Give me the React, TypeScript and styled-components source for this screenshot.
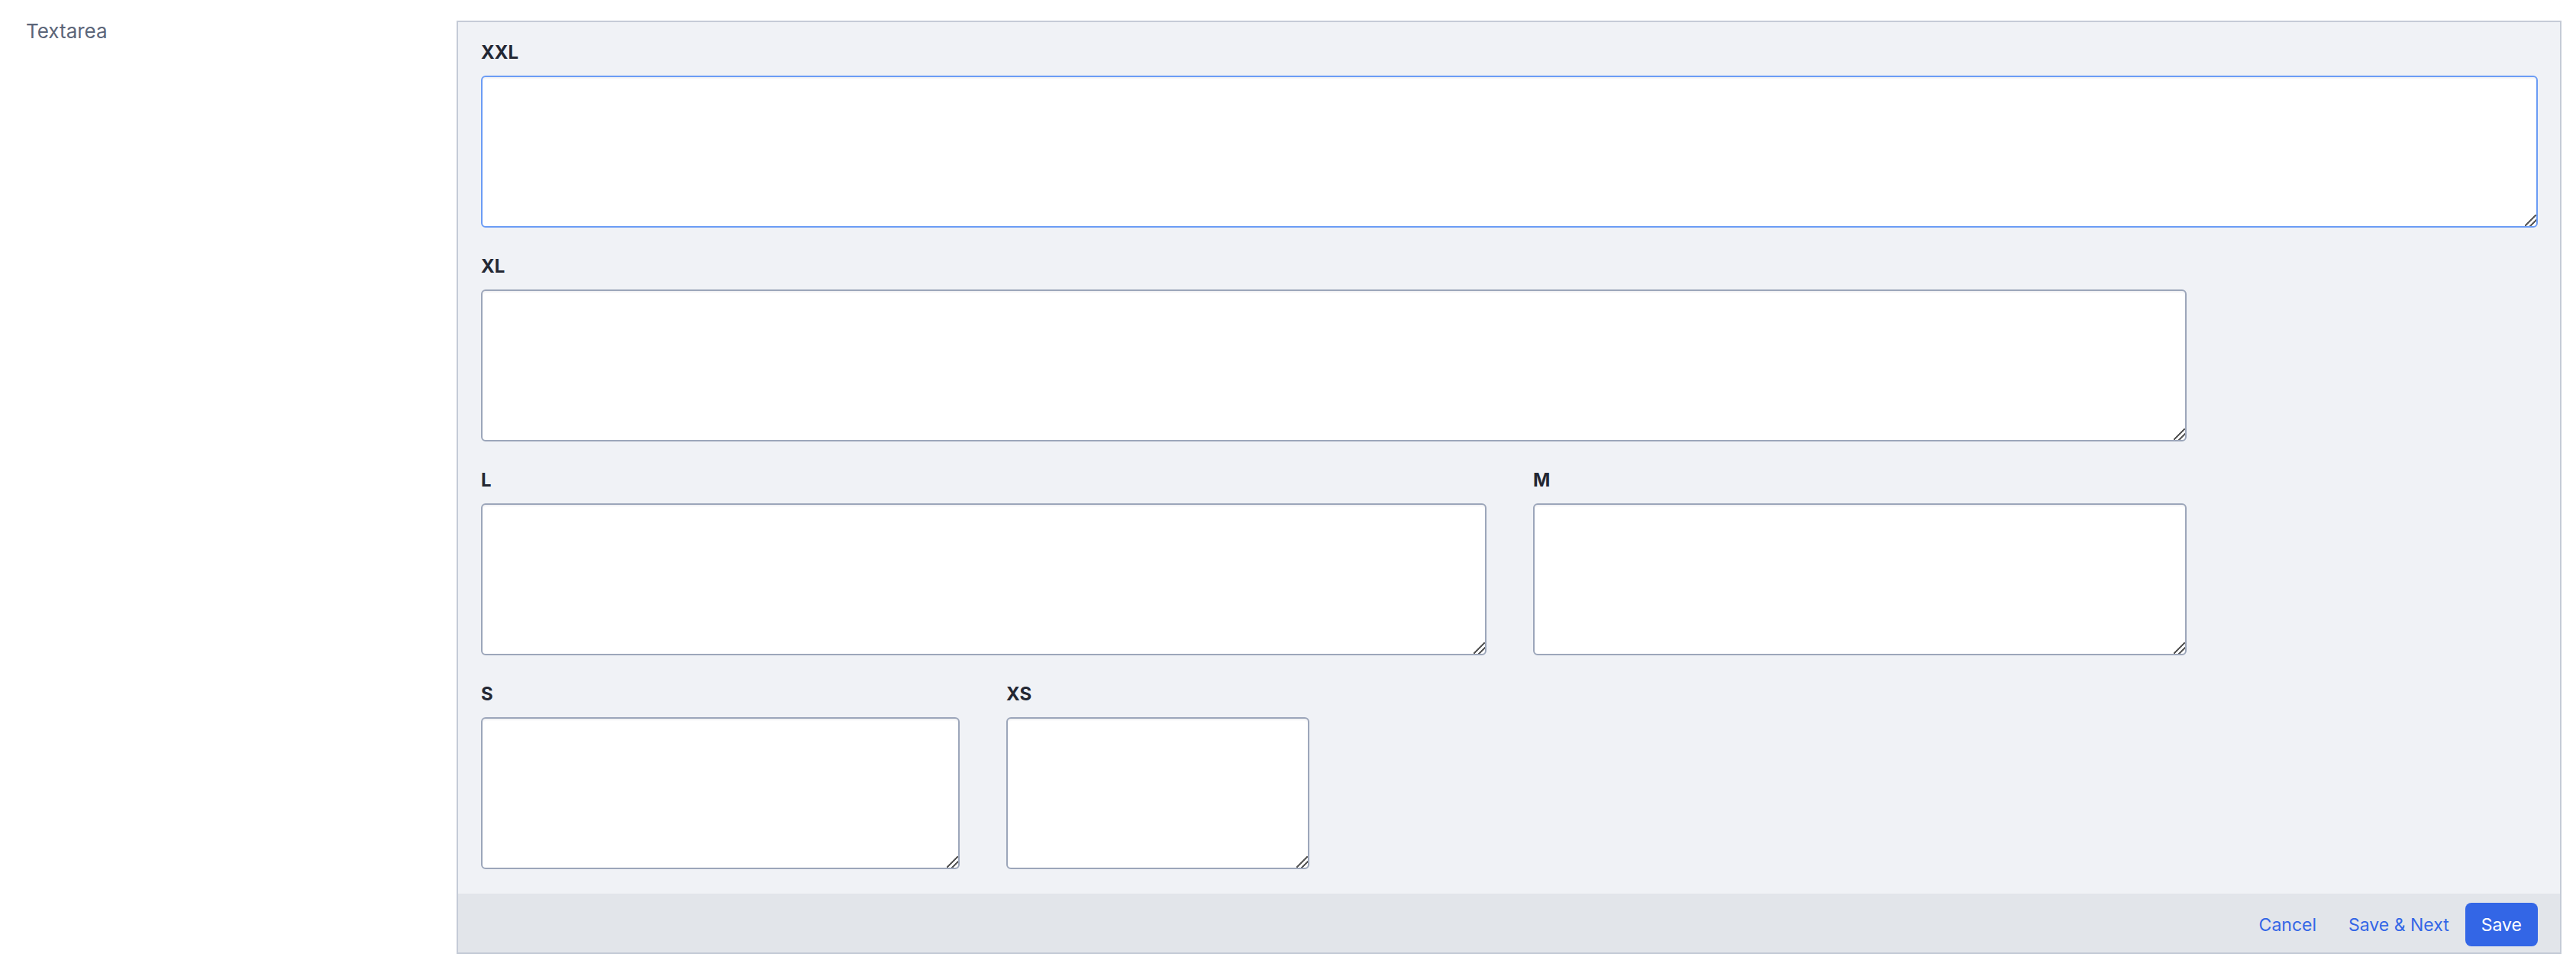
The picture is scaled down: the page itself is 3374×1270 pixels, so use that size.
import React from "react";
import styled, { createGlobalStyle } from "styled-components";

const GlobalStyle = createGlobalStyle`
  html, body {
    margin: 0;
    padding: 0;
    background: #ffffff;
  }
  body {
    font-family: Inter, "Noto Sans", "Liberation Sans", sans-serif;
  }
`;

type Field = { label: string; width: number; focused?: boolean };

// rows of the size demo, widths in px as measured on the reference
const rows: Field[][] = [
  [{ label: "XXL", width: 2694, focused: true }],
  [{ label: "XL", width: 2234 }],
  [
    { label: "L", width: 1317 },
    { label: "M", width: 856 },
  ],
  [
    { label: "S", width: 627 },
    { label: "XS", width: 397 },
  ],
];

const App = () => {
  return (
    <>
      <GlobalStyle />
      <Page>
        <Side>
          <Title>Textarea</Title>
        </Side>

        <Panel>
          <Body>
            {rows.map((row, i) => (
              <Row key={i}>
                {row.map((f) => (
                  <Group key={f.label} $width={f.width}>
                    <Label>{f.label}</Label>
                    <Area $focused={f.focused} />
                  </Group>
                ))}
              </Row>
            ))}
          </Body>

          <Footer>
            <TextButton>Cancel</TextButton>
            <TextButton>Save &amp; Next</TextButton>
            <PrimaryButton>Save</PrimaryButton>
          </Footer>
        </Panel>
      </Page>
    </>
  );
};

export default App;

const Page = styled.div`
  display: flex;
  align-items: flex-start;
  padding: 27px 19px 0 34px;
`;

const Side = styled.div`
  width: 564px;
  flex-shrink: 0;
`;

const Title = styled.div`
  font-size: 26px;
  line-height: 28px;
  color: #5b6579;
  font-weight: 400;
`;

const Panel = styled.div`
  flex: 1;
  border: 2px solid #c5cbd7;
  background: #f0f2f6;
  display: flex;
  flex-direction: column;
`;

const Body = styled.div`
  display: flex;
  flex-direction: column;
  gap: 35px;
  padding: 24px 29px 32px 30px;
`;

const Row = styled.div`
  display: flex;
  gap: 61px;
`;

const Group = styled.div<{ $width: number }>`
  width: ${(p) => p.$width}px;
  display: flex;
  flex-direction: column;
`;

const Label = styled.label`
  font-size: 24px;
  line-height: 32px;
  font-weight: 700;
  color: #232733;
  margin-bottom: 14px;
`;

const Area = styled.textarea<{ $focused?: boolean }>`
  box-sizing: border-box;
  width: 100%;
  height: 199px;
  border: 2px solid ${(p) => (p.$focused ? "#6b9cf5" : "#9ca6ba")};
  border-radius: 6px;
  background: #ffffff;
  box-shadow: inset 0 2px 2px rgba(30, 40, 60, 0.06);
  resize: both;
  outline: none;
  font-family: inherit;
  font-size: 24px;
  padding: 10px 14px;
  margin: 0;

  &::-webkit-scrollbar {
    width: 16px;
    height: 16px;
  }

  &::-webkit-resizer {
    background: linear-gradient(
      135deg,
      transparent 0 45%,
      #5c5c5c 45% 54%,
      transparent 54% 68%,
      #5c5c5c 68% 77%,
      transparent 77%
    );
  }
`;

const Footer = styled.div`
  display: flex;
  justify-content: flex-end;
  align-items: center;
  background: #e2e5ea;
  padding: 12px 29px 8px;
`;

const TextButton = styled.button`
  height: 57px;
  padding: 0 21px;
  border: none;
  background: transparent;
  color: #3366e6;
  font-family: inherit;
  font-size: 23px;
  cursor: pointer;
`;

const PrimaryButton = styled.button`
  height: 57px;
  padding: 0 21px;
  border: none;
  border-radius: 8px;
  background: #3366e6;
  color: #ffffff;
  font-family: inherit;
  font-size: 23px;
  cursor: pointer;
`;
